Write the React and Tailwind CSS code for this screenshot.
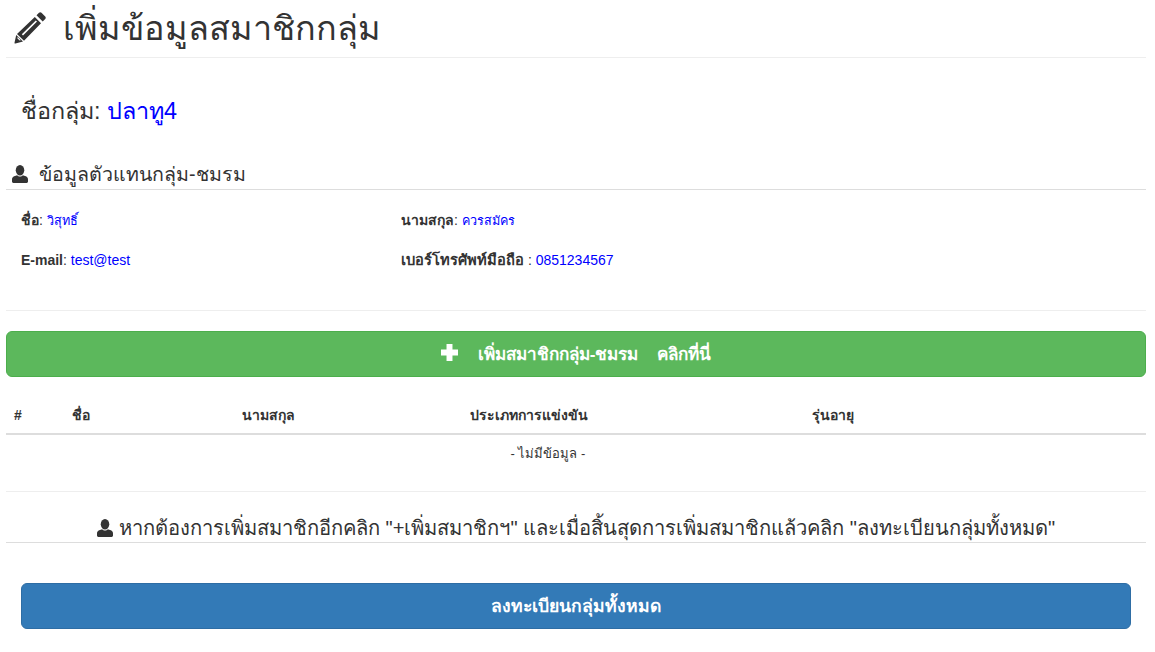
import React from 'react';

const FONT = { fontFamily: '"Liberation Sans", "Noto Sans", sans-serif' };

function PencilIcon({ className }) {
  return (
    <svg viewBox="0 0 32 32" className={className} fill="currentColor">
      <path d="M25 .8c.7-.7 1.800-.7 2.500 0l3.700 3.700c.7.700.7 1.800 0 2.500l-2.500 2.500-6.200-6.200z" />
      <path fillRule="evenodd" d="M20.800 5l6.200 6.200L10 28.800l-7-6.800z M7.800 22.200l1.200 1.200L23 9.600l-1.200-1.200z" />
      <path fillRule="evenodd" d="M2.200 23l6.800 6.600-7.600 2c-.6.100-1-.3-.9-.9z M3.300 26.300l2.300 2.300 1.200-.4-3.100-3.100z" />
    </svg>
  );
}

function UserIcon({ className }) {
  return (
    <svg viewBox="1 0 30 31" className={className} fill="currentColor" preserveAspectRatio="none">
      <ellipse cx="16" cy="9" rx="8" ry="9" />
      <path d="M10.500 17.500c1.400 1.300 3.400 2.300 5.500 2.300s4.100-1 5.500-2.300c1.200.4 3.300 1 5.500 2 2.300 1.100 4 2.800 4 5.500v3.500c0 1.400-1.100 2.500-2.500 2.500H3.500C2.100 31 1 29.900 1 28.500V25c0-2.700 1.700-4.400 4-5.500 2.200-1 4.300-1.600 5.500-2z" />
    </svg>
  );
}

function PlusIcon({ className }) {
  return (
    <svg viewBox="0 0 16 16" className={className} fill="currentColor">
      <path d="M5.200 0h5.600v5.200H16v5.600h-5.200V16H5.200v-5.200H0V5.200h5.200z" />
    </svg>
  );
}

function Info({ label, value, thai }) {
  return (
    <p className="text-[14px] leading-[20px] text-[#333]">
      <b>{label}</b>: <span className={thai ? 'text-[12.6px] text-[#0000ff]' : 'text-[#0000ff]'}>{value}</span>
    </p>
  );
}

export default function App() {
  const columns = [
    { name: '#', width: 'w-[58px]' },
    { name: 'ชื่อ', width: 'w-[170px]' },
    { name: 'นามสกุล', width: 'w-[228px]' },
    { name: 'ประเภทการแข่งขัน', width: 'w-[342px]' },
    { name: 'รุ่นอายุ', width: 'flex-1' },
  ];

  return (
    <div style={FONT} className="w-[1155px] h-[652px] overflow-hidden bg-white text-[#333] pl-[6px] pr-[9px]">
      <div className="h-[58px] border-b border-[#eee] flex items-center pb-[2px]">
        <PencilIcon className="w-[32px] h-[32px] ml-[8px] text-[#333]" />
        <h1 className="ml-[17px] text-[34.2px] leading-[40px] font-normal">เพิ่มข้อมูลสมาชิกกลุ่ม</h1>
      </div>

      <div className="pl-[15px] mt-[38px] text-[23.4px] leading-[30px]">
        ชื่อกลุ่ม: <span className="text-[#0000ff]">ปลาทู4</span>
      </div>

      <div className="mt-[32px] h-[32px] border-b border-[#ddd] flex items-center text-[19.6px] leading-[20px]">
        <UserIcon className="w-[16px] h-[18px] ml-[6px] text-[#333]" />
        <span className="ml-[11px]">ข้อมูลตัวแทนกลุ่ม-ชมรม</span>
      </div>

      <div className="pl-[15px] border-b border-[#eee] h-[121px] pt-[20px]">
        <div className="grid grid-cols-[380px_1fr] gap-y-[19px]">
          <Info label="ชื่อ" value="วิสุทธิ์" thai />
          <Info label="นามสกุล" value="ควรสมัคร" thai />
          <Info label="E-mail" value="test@test" />
          <p className="text-[14px] leading-[20px] text-[#333]">
            <b className="text-[14.7px]">เบอร์โทรศัพท์มือถือ</b> : <span className="text-[#0000ff]">0851234567</span>
          </p>
        </div>
      </div>

      <button className="mt-[20px] w-full h-[46px] rounded-[6px] bg-[#5cb85c] border border-[#4cae4c] text-white text-[17.1px] font-bold flex items-center justify-center pt-[2px]">
        <PlusIcon className="w-[17px] h-[17px] mr-[20px] mb-[5px]" />
        <span className="whitespace-pre">เพิ่มสมาชิกกลุ่ม-ชมรม    คลิกที่นี่</span>
      </button>

      <div className="mt-[18px] h-[40px] border-b-2 border-[#ddd] flex items-center text-[14px] font-bold pl-[8px] pt-[2px]">
        {columns.map((col) => (
          <div key={col.name} className={col.width}>{col.name}</div>
        ))}
      </div>

      <div className="h-[57px] border-b border-[#eee] pt-[9px] text-[13px] leading-[20px]">
        <div className="w-[1084px] text-center">- ไม่มีข้อมูล -</div>
      </div>

      <div className="mt-[22px] h-[29px] border-b border-[#ddd] flex items-center justify-center text-[20.15px] leading-[20px]">
        <UserIcon className="w-[16px] h-[18px] mr-[6px] text-[#333]" />
        <span>หากต้องการเพิ่มสมาชิกอีกคลิก "+เพิ่มสมาชิกฯ" และเมื่อสิ้นสุดการเพิ่มสมาชิกแล้วคลิก "ลงทะเบียนกลุ่มทั้งหมด"</span>
      </div>

      <div className="pl-[15px] pr-[15px] mt-[40px]">
        <button className="w-full h-[46px] rounded-[6px] bg-[#337ab7] border border-[#2e6da4] text-white text-[17.6px] font-bold">
          ลงทะเบียนกลุ่มทั้งหมด
        </button>
      </div>
    </div>
  );
}
